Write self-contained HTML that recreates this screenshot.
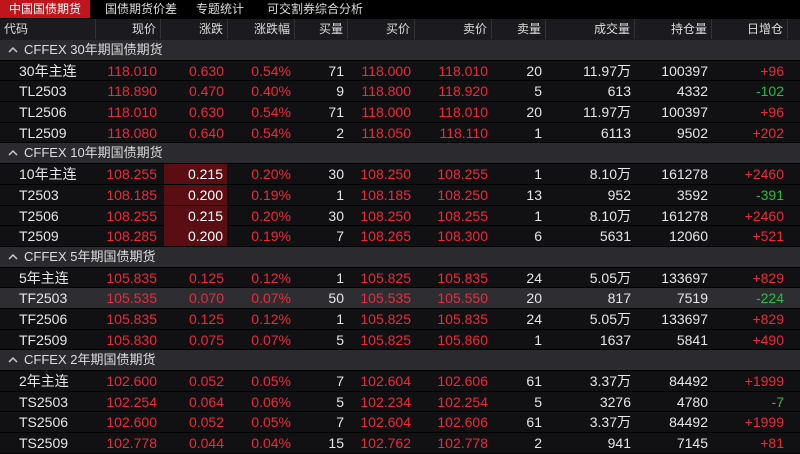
<!DOCTYPE html>
<html><head><meta charset="utf-8"><style>
body{margin:0;width:800px;height:454px;background:#000;overflow:hidden;font-family:"Liberation Sans","Noto Sans CJK SC",sans-serif;font-size:14px;color:#e6e6e6}
.tabs{position:absolute;top:0;left:0;height:18px;width:800px;font-size:12px}
.tabs div{position:absolute;top:0;line-height:18px;color:#ddd;white-space:nowrap}
.tabs .on{background:#c1151d;color:#fff;width:90px;text-align:center;left:0}
.hdr{position:absolute;top:19px;left:0;width:800px;height:21px;background:#1b1b1f}
.hdr div{position:absolute;top:0;height:20px;line-height:20px;text-align:right;border-right:1px solid #333;color:#ddd;font-size:12px;box-sizing:border-box;padding-right:4px}
.rows{position:absolute;top:40px;left:0;width:800px}
.r{position:relative;height:20.7px;background:#111114;border-bottom:1px solid #000;box-sizing:border-box}
.g{background:#2a2a2f;font-size:13px;line-height:19px;padding-left:24px;color:#ddd}
.g svg{position:absolute;left:8px;top:6px}
.hl{background:#2e2e32}
.r span{position:absolute;top:0;line-height:20px;text-align:right;box-sizing:border-box;padding-right:4px;white-space:nowrap}
.r span.c{text-align:left;padding-left:19px}
.red{color:#f0283a}.grn{color:#22c040}
.bg{background:#5a0e13;color:#fff!important}
</style></head><body>
<div class="tabs"><div class="on">中国国债期货</div><div style="left:105px">国债期货价差</div><div style="left:196px">专题统计</div><div style="left:267px">可交割券综合分析</div></div>
<div class="hdr">
<div style="left:0;width:96px;text-align:left;padding-left:4px">代码</div>
<div style="left:96px;width:65px">现价</div>
<div style="left:161px;width:67px">涨跌</div>
<div style="left:228px;width:67px">涨跌幅</div>
<div style="left:295px;width:53px">买量</div>
<div style="left:348px;width:67px">买价</div>
<div style="left:415px;width:77px">卖价</div>
<div style="left:492px;width:54px">卖量</div>
<div style="left:546px;width:89px">成交量</div>
<div style="left:635px;width:77px">持仓量</div>
<div style="left:712px;width:76px">日增仓</div>
</div>
<div class="rows" id="rows"></div>
<script>
var cols=[[0,96],[96,65],[161,67],[228,67],[295,53],[348,67],[415,77],[492,54],[546,89],[635,77],[712,76]];
var D=[
["g","CFFEX 30年期国债期货"],
["30年主连","118.010","0.630","0.54%","71","118.000","118.010","20","11.97万","100397","+96"],
["TL2503","118.890","0.470","0.40%","9","118.800","118.920","5","613","4332","-102"],
["TL2506","118.010","0.630","0.54%","71","118.000","118.010","20","11.97万","100397","+96"],
["TL2509","118.080","0.640","0.54%","2","118.050","118.110","1","6113","9502","+202"],
["g","CFFEX 10年期国债期货"],
["10年主连","108.255","0.215","0.20%","30","108.250","108.255","1","8.10万","161278","+2460","b"],
["T2503","108.185","0.200","0.19%","1","108.185","108.250","13","952","3592","-391","b"],
["T2506","108.255","0.215","0.20%","30","108.250","108.255","1","8.10万","161278","+2460","b"],
["T2509","108.285","0.200","0.19%","7","108.265","108.300","6","5631","12060","+521","b"],
["g","CFFEX 5年期国债期货"],
["5年主连","105.835","0.125","0.12%","1","105.825","105.835","24","5.05万","133697","+829"],
["TF2503","105.535","0.070","0.07%","50","105.535","105.550","20","817","7519","-224","h"],
["TF2506","105.835","0.125","0.12%","1","105.825","105.835","24","5.05万","133697","+829"],
["TF2509","105.830","0.075","0.07%","5","105.825","105.860","1","1637","5841","+490"],
["g","CFFEX 2年期国债期货"],
["2年主连","102.600","0.052","0.05%","7","102.604","102.606","61","3.37万","84492","+1999"],
["TS2503","102.254","0.064","0.06%","5","102.234","102.254","5","3276","4780","-7"],
["TS2506","102.600","0.052","0.05%","7","102.604","102.606","61","3.37万","84492","+1999"],
["TS2509","102.778","0.044","0.04%","15","102.762","102.778","2","941","7145","+81"]];
var h="";
D.forEach(function(r){
 if(r[0]=="g"){h+='<div class="r g"><svg width="10" height="7" viewBox="0 0 10 7"><path d="M1 6L5 2L9 6" stroke="#ccc" stroke-width="1.5" fill="none"/></svg>'+r[1]+'</div>';return;}
 h+='<div class="r'+(r[11]=="h"?" hl":"")+'">';
 for(var i=0;i<11;i++){
  var c="";
  if(i==0)c="c";else if([1,2,3,5,6].indexOf(i)>=0)c="red";
  if(i==10)c=r[10][0]=="-"?"grn":"red";
  if(i==2&&r[11]=="b")c+=" bg";
  var l=cols[i][0],w=cols[i][1];
  if(i==2&&r[11]=="b"){l=164;w=63;}
  h+='<span class="'+c+'" style="left:'+l+'px;width:'+w+'px">'+r[i]+'</span>';
 }
 h+='</div>';
});
document.getElementById("rows").innerHTML=h;
</script>
</body></html>
